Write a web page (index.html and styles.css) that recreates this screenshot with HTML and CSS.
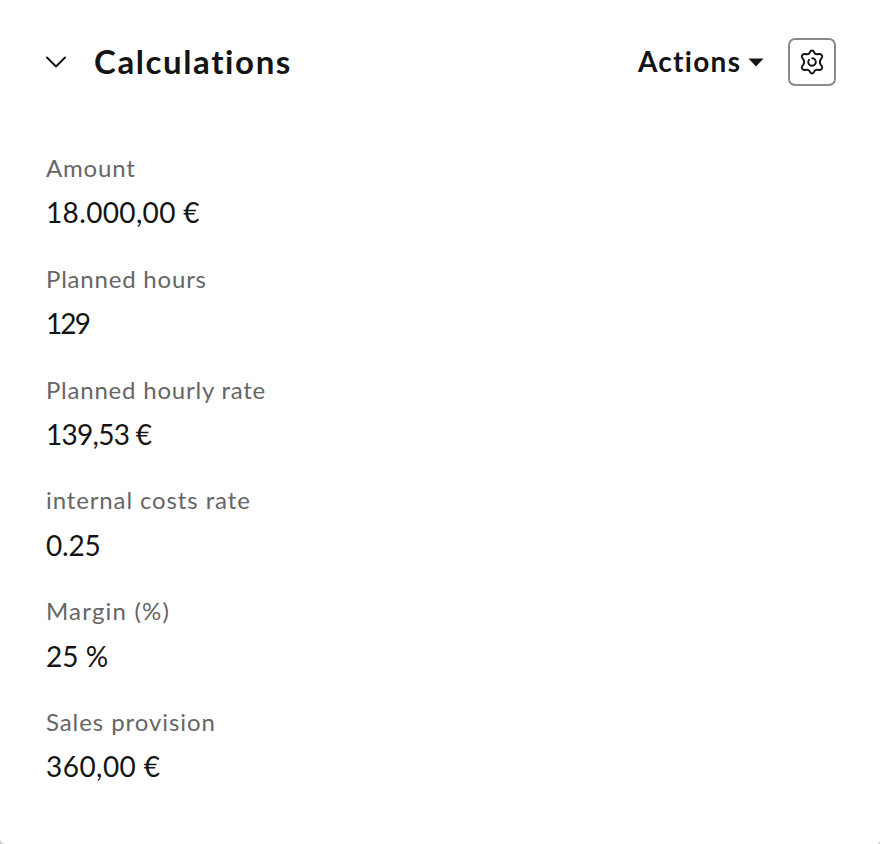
FILE: index.html
```
<!DOCTYPE html>
<html lang="en">
<head>
<meta charset="utf-8">
<title>Calculations</title>
<link rel="stylesheet" href="styles.css">
</head>
<body>
<main class="card">
  <header class="card-header">
    <svg class="chevron" viewBox="0 0 22 14" aria-hidden="true"><path d="M2 2.5 11 11.5 20 2.5"/></svg>
    <h1 class="title">Calculations</h1>
    <button class="actions"><span class="actions-label">Actions</span><svg class="caret" viewBox="0 0 16 9" aria-hidden="true"><path d="M.5.5h15L8 8.5z"/></svg></button>
    <button class="settings" aria-label="Settings">
      <svg class="gear" viewBox="0 0 28 28" aria-hidden="true">
        <path d="M14 2.500c1.200 0 1.800.8 2.200 1.800.5 1.300 1.500 2 2.900 1.900l2.300-.2c1.300-.1 2 .4 2.600 1.400.5 1 .3 1.800-.4 2.700l-1 1.400c-.9 1.400-.9 3.600 0 5l1 1.400c.7.9.9 1.700.4 2.700-.6 1-1.300 1.500-2.600 1.400l-2.300-.2c-1.400-.1-2.400.6-2.900 1.900-.4 1-1 1.800-2.200 1.800s-1.800-.8-2.200-1.800c-.5-1.300-1.500-2-2.900-1.900l-2.300.2c-1.300.1-2-.4-2.600-1.400-.5-1-.3-1.800.4-2.700l1-1.400c.9-1.400.9-3.600 0-5l-1-1.400c-.7-.9-.9-1.700-.4-2.700C4.600 6.400 5.300 5.900 6.600 6l2.300.2c1.400.1 2.400-.6 2.900-1.900.4-1 1-1.800 2.200-1.800z"/>
        <path d="M14.300 10.200a3.800 3.800 0 1 1-3.300 1.500"/>
      </svg>
    </button>
  </header>
  <dl class="fields">
    <div class="field"><dt class="label amount">Amount</dt><dd class="value amount-value">18.000,00 €</dd></div>
    <div class="field"><dt class="label hours">Planned hours</dt><dd class="value hours-value">129</dd></div>
    <div class="field"><dt class="label rate">Planned hourly rate</dt><dd class="value rate-value">139,53 €</dd></div>
    <div class="field"><dt class="label costs">internal costs rate</dt><dd class="value costs-value">0.25</dd></div>
    <div class="field"><dt class="label margin">Margin (%)</dt><dd class="value margin-value">25 %</dd></div>
    <div class="field"><dt class="label provision">Sales provision</dt><dd class="value provision-value">360,00 €</dd></div>
  </dl>
</main>
</body>
</html>
```
FILE: styles.css
```
* { box-sizing: border-box; margin: 0; padding: 0; }
body { background: #c4c4c4; font-family: Lato, "Open Sans", sans-serif; color: #141414; }
.card { height: 844px; padding: 38px 44px 0 46px; background: #fff; border-radius: 0 0 4px 5px; overflow: hidden; }
.card-header { display: flex; align-items: center; height: 48px; }
.chevron { width: 22px; height: 14px; margin-left: -1px; fill: none; stroke: #141414; stroke-width: 2; stroke-linecap: round; stroke-linejoin: round; }
.title { margin-left: 27px; padding-bottom: 2px; font-size: 33px; line-height: 46px; font-weight: 700; letter-spacing: 1.6px; }
.actions { display: flex; align-items: center; margin-left: auto; border: 0; background: none; font: 700 28px/46px Lato, sans-serif; color: inherit; letter-spacing: 1.3px; }
.actions-label { padding-bottom: 2px; }
.caret { width: 16px; height: 9px; margin-left: 6.7px; fill: #141414; }
.settings { display: flex; align-items: center; justify-content: center; width: 48px; height: 48px; margin-left: 24px; border: 2px solid #8a8a8a; border-radius: 7px; background: #fff; }
.gear { width: 28px; height: 28px; fill: none; stroke: #141414; stroke-width: 1.9; stroke-linecap: round; stroke-linejoin: round; }
.fields { margin-top: 66px; }
.field { height: 110.8px; }
.label { font-size: 24px; line-height: 32px; color: #666; white-space: nowrap; }
.value { margin-top: 8.4px; font-size: 28px; line-height: 41px; white-space: nowrap; }
.amount { letter-spacing: .8px; }
.hours { letter-spacing: .8px; }
.rate { letter-spacing: .78px; }
.costs { letter-spacing: .88px; }
.margin { letter-spacing: 1.2px; }
.provision { letter-spacing: .92px; }
.amount-value { letter-spacing: .35px; }
.hours-value { letter-spacing: -1.9px; }
.rate-value { letter-spacing: -.7px; }
.costs-value { letter-spacing: -.2px; }
.provision-value { letter-spacing: .45px; }
```
